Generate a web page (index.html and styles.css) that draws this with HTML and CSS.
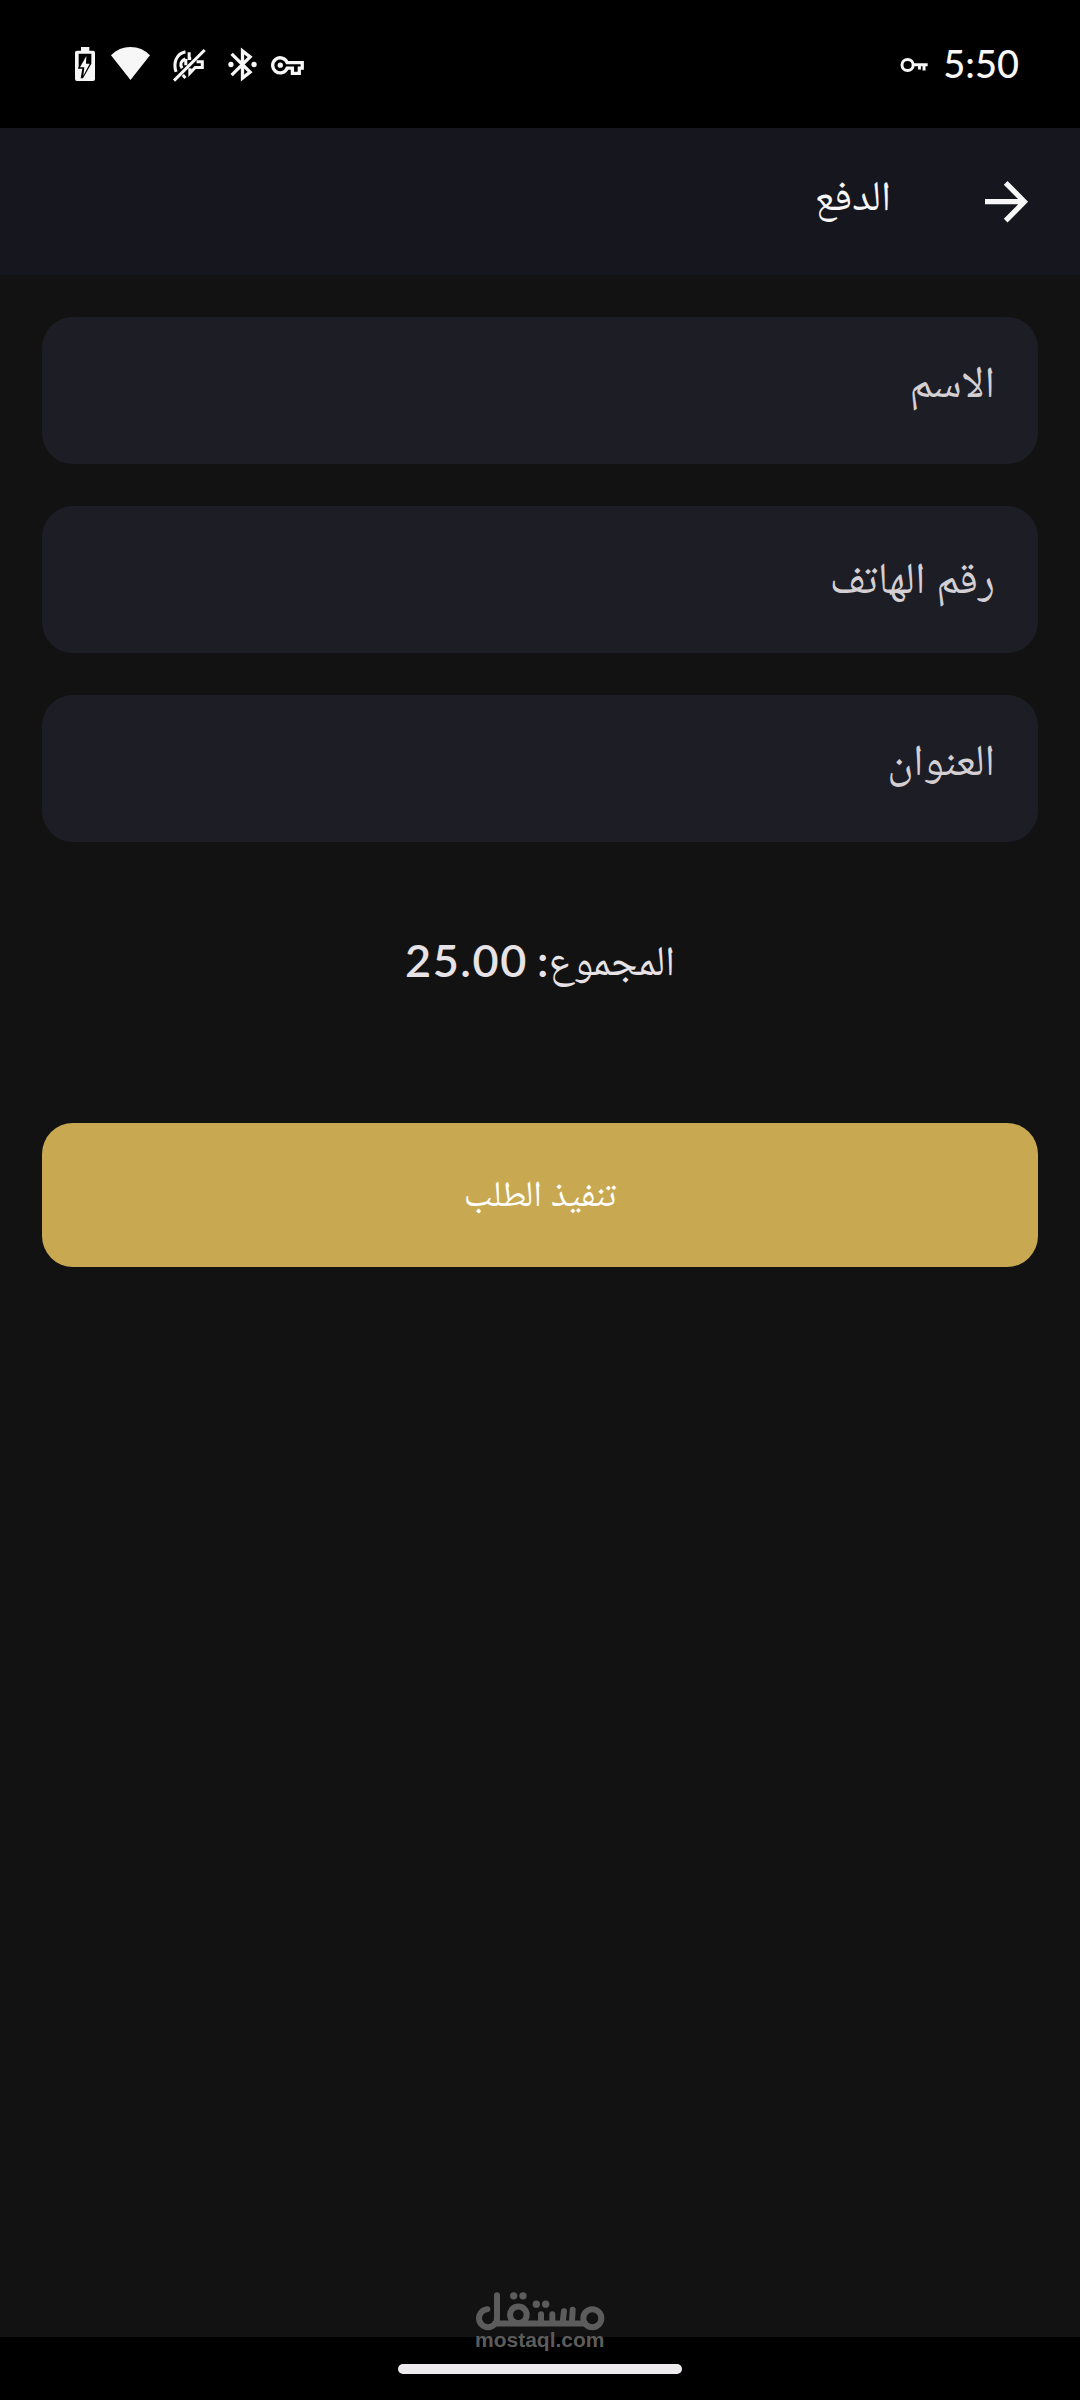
FILE: index.html
```
<!DOCTYPE html>
<html lang="ar" dir="rtl">
<head>
<meta charset="utf-8">
<title>الدفع</title>
<link rel="stylesheet" href="styles.css">
</head>
<body>
<div class="screen">
  <div class="status" dir="ltr">
    <div class="status-icons">
      <svg class="battery" viewBox="0 0 60 102"><path fill="#f7f7f7" fill-rule="evenodd" d="M18 0H43V11H54Q60 11 60 17V96Q60 102 54 102H6Q0 102 0 96V17Q0 11 6 11H18ZM11 20V58L9 65H22L17 94H24L49 50V20Z"/><path fill="#f7f7f7" d="M34 27 15 61H28L25 86 44 50H33Z"/></svg>
      <svg class="wifi" viewBox="0 0 117 99"><path fill="#f7f7f7" d="M0 25Q24 0 58.500 0T117 25L58.500 99Z"/></svg>
      <svg class="muted" viewBox="0 0 98 98"><g fill="none" stroke="#f7f7f7" stroke-width="9"><path d="M37 8C10 14 0 40 9 68"/><path d="M37 29C22 36 20 47 27 57M38 30V48M48 10V28H54M70 38H87V55H66L50 72V57M29 77 37 86"/><path d="M3 94 94 3"/></g></svg>
      <svg class="bluetooth" viewBox="0 0 86 100"><path fill="none" stroke="#f7f7f7" stroke-width="10" d="M10 18 66 73 43 91V9L66 27 10 82"/><circle cx="8" cy="50" r="8" fill="#f7f7f7"/><circle cx="78" cy="50" r="8" fill="#f7f7f7"/></svg>
      <svg class="key" viewBox="0 0 100 58"><path fill="none" stroke="#f7f7f7" stroke-width="10" d="M49 20H95V37H86V53H65V37H49A23 23 0 1 1 49 20Z"/><circle cx="28" cy="28" r="8" fill="#f7f7f7"/></svg>
    </div>
    <div class="status-time">
      <svg class="small-key" viewBox="0 0 82 42"><g fill="none" stroke="#f7f7f7" stroke-width="9"><circle cx="20" cy="21" r="17"/><path d="M37 20H81M56 20V35M70 20V38"/></g></svg>
      <span class="clock">5:50</span>
    </div>
  </div>
  <header class="appbar">
    <svg class="arrow" viewBox="0 0 128 128"><path fill="none" stroke="#f7f7f7" stroke-width="16" d="M0 63H116M63 6 120 63 63 121"/></svg>
    <h1 class="title">الدفع</h1>
  </header>
  <main class="content">
    <div class="field"><span class="label name">الاسم</span></div>
    <div class="field"><span class="label phone">رقم الهاتف</span></div>
    <div class="field"><span class="label address">العنوان</span></div>
    <div class="total"><span class="total-label">المجموع</span><span class="colon">:</span><span class="amount">25.00</span></div>
    <button class="submit"><span class="submit-text">تنفيذ الطلب</span></button>
  </main>
  <footer class="nav"><div class="handle"></div></footer>
  <div class="brand" dir="ltr">
    <svg class="brand-logo" viewBox="0 0 390 116"><g fill="none" stroke="#5c5c5c" stroke-width="18" stroke-linecap="round"><path d="M37 51A27 27 0 1 0 66 79V9M60 94H330"/><circle cx="130" cy="68" r="25"/><circle cx="352" cy="78" r="27"/><path d="M198 92V66M232 92V66M263 92 267 57M291 86 293 53"/></g><g fill="#5c5c5c"><circle cx="116" cy="11" r="11"/><circle cx="144" cy="11" r="11"/><circle cx="184" cy="36" r="11"/><circle cx="212" cy="36" r="11"/></g></svg>
    <span class="brand-name">mostaql.com</span>
  </div>
</div>
</body>
</html>
```
FILE: styles.css
```
* { box-sizing: border-box; }
body { margin: 0; background: #121212; font-family: Roboto, "Noto Naskh Arabic UI", "Noto Naskh Arabic", "Noto Sans Arabic", "DejaVu Sans", sans-serif; }
.screen { position: relative; width: 1080px; height: 2400px; display: flex; flex-direction: column; background: #121212; overflow: hidden; }
svg { display: block; flex: none; overflow: visible; }
.status { height: 128px; background: #000; display: flex; justify-content: space-between; padding: 0 61px 0 75px; }
.status-icons, .status-time { display: flex; align-items: center; }
.battery { width: 20px; height: 34px; }
.wifi { width: 39px; height: 33px; margin-left: 16px; margin-bottom: 1px; }
.muted { width: 33px; height: 33px; margin-left: 23px; margin-top: 3px; }
.bluetooth { width: 29px; height: 33px; margin-left: 22px; }
.key { width: 33px; height: 19px; margin-left: 14px; margin-top: 2px; }
.small-key { width: 27px; height: 14px; margin-top: 2px; }
.clock { color: #f7f7f7; font-family: Lato, sans-serif; font-weight: 500; font-size: 38px; line-height: 40px; margin-left: 15px; padding-bottom: 2px; }
.appbar { height: 147px; background: #16161f; display: flex; align-items: center; padding-right: 53px; }
.arrow { width: 42px; height: 42px; }
.title { margin: 0 94px 0 0; padding-top: 1px; font-weight: 400; font-size: 42px; line-height: 50px; color: #f7f7f7; white-space: nowrap; }
.content { flex: 1; display: flex; flex-direction: column; padding: 42px 42px 0; }
.field { height: 147px; border-radius: 31px; background: #1d1d26; margin-bottom: 42px; padding-right: 43px; display: flex; align-items: center; }
.label { color: #d3cfd3; font-size: 44px; line-height: 50px; white-space: nowrap; }
.name, .address { padding-bottom: 5px; }
.phone { padding-top: 9px; }
.total { height: 70px; margin-top: 44px; display: flex; justify-content: center; align-items: center; color: #e6e2e6; font-size: 42px; line-height: 60px; }
.total-label { padding-top: 8px; }
.colon, .amount { font-family: Lato, sans-serif; font-size: 45px; font-weight: 600; padding-bottom: 6px; }
.amount { margin-right: 9px; letter-spacing: 1.6px; }
.submit { height: 144px; margin-top: 125px; border: 0; border-radius: 31px; background: #c8a951; color: #fff; font-family: inherit; font-size: 36.500px; line-height: 50px; padding: 8px 0 0; }
.nav { height: 63px; background: #000; display: flex; justify-content: center; padding-top: 27px; }
.handle { width: 284px; height: 10px; border-radius: 5px; background: #eeebee; }
.brand { position: absolute; left: 475px; top: 2292px; width: 130px; color: #5c5c5c; }
.brand-logo { width: 130px; height: 39px; }
.brand-name { display: block; margin-top: -4px; font: bold 21px/26px "Liberation Sans", sans-serif; }
```
